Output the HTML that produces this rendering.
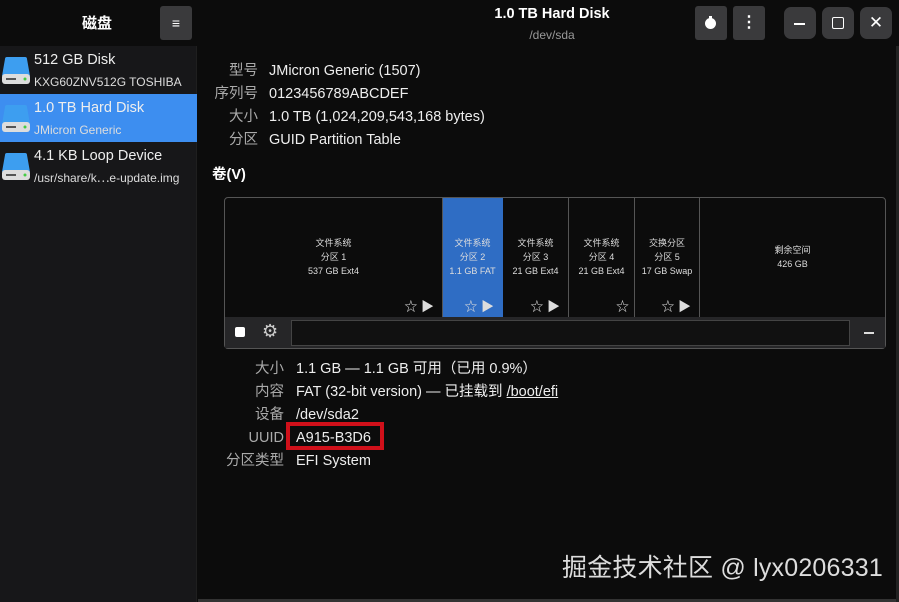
<!DOCTYPE html>
<html><head><meta charset="utf-8"><style>
*{margin:0;padding:0;box-sizing:border-box}
body{width:899px;height:602px;background:#0c0c0c;color:#fff;font-family:"Liberation Sans","Noto Sans CJK SC",sans-serif;position:relative;overflow:hidden;line-height:20px}
.abs{position:absolute}
.side{left:0;top:46px;width:197px;height:556px;background:#171719;border-right:1px solid #1f1f1f}
.item{position:absolute;left:0;width:197px;height:48px}
.item .t1{position:absolute;left:34px;top:4px;font-size:14.5px;color:#eee;white-space:nowrap}
.item .t2{position:absolute;left:34px;top:26px;font-size:12px;color:#ddd;white-space:nowrap}
.btn{background:#3a3a3c;border-radius:3px}
.wbtn{background:#3a3a3c;border-radius:7px;width:32px;height:32px;top:7px}
.lbl{font-size:14.5px;color:#aaa;text-align:right;position:absolute;white-space:nowrap;height:20px;line-height:20px}
.val{font-size:14.5px;color:#eee;position:absolute;white-space:nowrap;height:20px;line-height:20px}
.part{position:absolute;top:198px;height:119px;font-size:9px;color:#ddd;text-align:center;line-height:14px;border-right:1px solid #555}
.part .tx{position:absolute;left:0;right:0;top:38px}
.ic{position:absolute;bottom:2px;font-size:13px;line-height:16px}
</style></head><body>
<div class="abs" style="left:82px;top:14px;font-size:15px;font-weight:bold">磁盘</div>
<div class="abs btn" style="left:160px;top:6px;width:32px;height:34px;color:#fff;font-size:14px;text-align:center;line-height:34px">≡</div>
<div class="abs" style="left:452px;top:4px;width:200px;text-align:center;font-size:14.5px;font-weight:bold">1.0 TB Hard Disk</div>
<div class="abs" style="left:452px;top:25px;width:200px;text-align:center;font-size:12px;color:#999">/dev/sda</div>
<div class="abs btn" style="left:695px;top:6px;width:32px;height:34px"><div style="position:absolute;left:10px;top:12px;width:11px;height:11px;border-radius:50%;background:#fff"></div><div style="position:absolute;left:14px;top:10px;width:3px;height:3px;background:#fff"></div></div>
<div class="abs btn" style="left:733px;top:6px;width:32px;height:34px;text-align:center;line-height:34px;font-weight:bold;font-size:16px">⋮</div>
<div class="abs wbtn" style="left:784px"><div style="position:absolute;left:10px;top:16px;width:11px;height:1.5px;background:#fff"></div></div>
<div class="abs wbtn" style="left:822px"><div style="position:absolute;left:10px;top:10px;width:12px;height:12px;border:1.5px solid #fff;border-radius:2px"></div></div>
<div class="abs wbtn" style="left:860px;text-align:center;line-height:32px;font-size:17px">✕</div>
<div class="abs" style="left:896px;top:46px;width:3px;height:556px;background:#222"></div>

<div class="abs side">
 <div class="item" style="top:0"><div class="t1">512 GB Disk</div><div class="t2">KXG60ZNV512G TOSHIBA</div></div>
 <div class="item" style="top:48px;background:#3d8ef0"><div class="t1">1.0 TB Hard Disk</div><div class="t2">JMicron Generic</div></div>
 <div class="item" style="top:96px"><div class="t1">4.1 KB Loop Device</div><div class="t2">/usr/share/k⋯e-update.img</div></div>
</div>
<svg class="abs" style="left:2px;top:54px" width="30" height="140">
 <g id="d"><path d="M5 3h18a2 2 0 0 1 2 2l3 17H0l3-17a2 2 0 0 1 2-2z" fill="#3d9ef0"/><rect x="0" y="20" width="28" height="10" rx="3" fill="#ddd"/><rect x="4" y="24" width="10" height="2" fill="#555"/><circle cx="23" cy="25" r="1.5" fill="#4c4"/></g>
 <use href="#d" y="48"/><use href="#d" y="96"/>
</svg>

<div class="lbl" style="left:210px;top:61px;width:48px">型号</div><div class="val" style="left:269px;top:61px">JMicron Generic (1507)</div>
<div class="lbl" style="left:200px;top:84px;width:58px">序列号</div><div class="val" style="left:269px;top:84px">0123456789ABCDEF</div>
<div class="lbl" style="left:210px;top:107px;width:48px">大小</div><div class="val" style="left:269px;top:107px">1.0 TB (1,024,209,543,168 bytes)</div>
<div class="lbl" style="left:210px;top:130px;width:48px">分区</div><div class="val" style="left:269px;top:130px">GUID Partition Table</div>
<div class="abs" style="left:212px;top:165px;font-size:14.5px;font-weight:bold">卷(V)</div>

<div class="abs" style="left:224px;top:197px;width:662px;height:152px;border:1px solid #555;border-radius:4px;background:#0c0c0c"></div>
<div class="part" style="left:225px;width:218px"><div class="tx">文件系统<br>分区 1<br>537 GB Ext4</div><span class="ic" style="right:8px">☆ ▶</span></div>
<div class="part" style="left:443px;width:60px;background:#2f6dc4;border-color:#2f6dc4"><div class="tx">文件系统<br>分区 2<br>1.1 GB FAT</div><span class="ic" style="right:8px">☆ ▶</span></div>
<div class="part" style="left:503px;width:66px"><div class="tx">文件系统<br>分区 3<br>21 GB Ext4</div><span class="ic" style="right:8px">☆ ▶</span></div>
<div class="part" style="left:569px;width:66px"><div class="tx">文件系统<br>分区 4<br>21 GB Ext4</div><span class="ic" style="right:5px">☆</span></div>
<div class="part" style="left:635px;width:65px"><div class="tx">交换分区<br>分区 5<br>17 GB Swap</div><span class="ic" style="right:8px">☆ ▶</span></div>
<div class="part" style="left:700px;width:185px;border:none"><div class="tx" style="top:45px">剩余空间<br>426 GB</div></div>
<div class="abs" style="left:225px;top:317px;width:660px;height:31px;background:#262628"></div>
<div class="abs" style="left:235px;top:327px;width:10px;height:10px;background:#fff;border-radius:2px"></div>
<div class="abs" style="left:262px;top:321px;font-size:18px;color:#ccc">⚙</div>
<div class="abs" style="left:291px;top:320px;width:559px;height:26px;border:1px solid #444;background:#111"></div>
<div class="abs" style="left:864px;top:332px;width:10px;height:1.5px;background:#ddd"></div>

<div class="lbl" style="left:220px;top:359px;width:64px">大小</div><div class="val" style="left:296px;top:359px">1.1 GB — 1.1 GB 可用（已用 0.9%）</div>
<div class="lbl" style="left:220px;top:382px;width:64px">内容</div><div class="val" style="left:296px;top:382px">FAT (32-bit version) — 已挂载到 <u>/boot/efi</u></div>
<div class="lbl" style="left:220px;top:405px;width:64px">设备</div><div class="val" style="left:296px;top:405px">/dev/sda2</div>
<div class="lbl" style="left:220px;top:428px;width:64px">UUID</div><div class="val" style="left:296px;top:428px">A915-B3D6</div>
<div class="abs" style="left:286px;top:422px;width:98px;height:28px;border:4px solid #d0101a"></div>
<div class="lbl" style="left:210px;top:451px;width:74px">分区类型</div><div class="val" style="left:296px;top:451px">EFI System</div>

<div class="abs" style="left:562px;top:553px;font-size:25px;line-height:30px;color:#ddd;white-space:nowrap;letter-spacing:0.2px">掘金技术社区 @ lyx0206331</div>
<div class="abs" style="left:198px;top:599px;width:698px;height:3px;background:#333"></div>
</body></html>
